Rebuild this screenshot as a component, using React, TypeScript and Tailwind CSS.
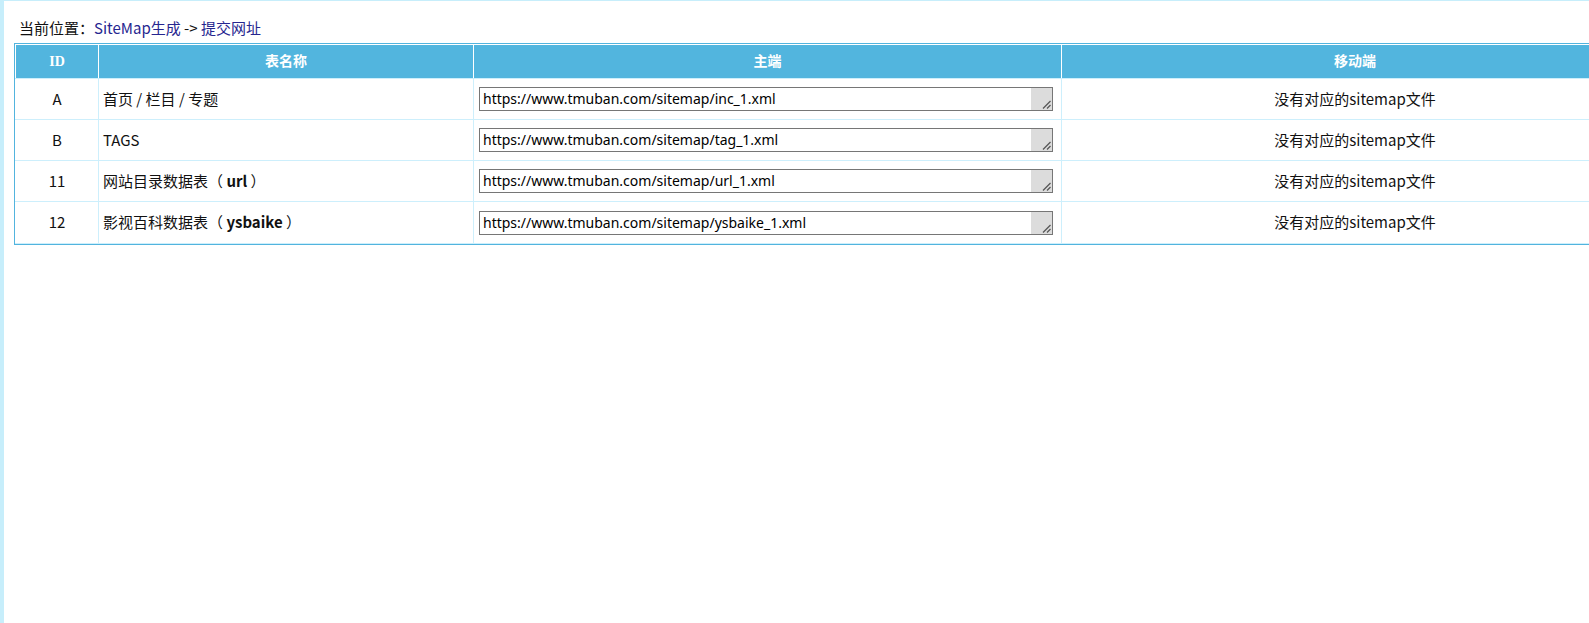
import React from "react";

const rows = [
  { id: "A", name: <>首页 / 栏目 / 专题</>, url: "https://www.tmuban.com/sitemap/inc_1.xml", h: "h-[41px]" },
  { id: "B", name: <>TAGS</>, url: "https://www.tmuban.com/sitemap/tag_1.xml", h: "h-[41px]" },
  { id: "11", name: <>网站目录数据表（ <b>url</b> ）</>, url: "https://www.tmuban.com/sitemap/url_1.xml", h: "h-[41px]" },
  { id: "12", name: <>影视百科数据表（ <b>ysbaike</b> ）</>, url: "https://www.tmuban.com/sitemap/ysbaike_1.xml", h: "h-[43px] border-b" },
];

function UrlBox({ url }: { url: string }) {
  return (
    <div className="flex h-[24px] w-[574px] border border-[#767676] bg-white">
      <div className="flex-1 pl-[3px] text-[14px] leading-[22px] text-black overflow-hidden whitespace-nowrap font-['Noto_Sans',sans-serif]">
        {url}
      </div>
      <div className="relative w-[21px] bg-[#dcdcdc]">
        <svg className="absolute right-[1px] bottom-[1px]" width="10" height="10" viewBox="0 0 10 10">
          <line x1="2" y1="9.5" x2="9.5" y2="2" stroke="#555" strokeWidth="1.3" />
          <line x1="6" y1="9.5" x2="9.5" y2="6" stroke="#555" strokeWidth="1.3" />
        </svg>
      </div>
    </div>
  );
}

const thCls =
  "h-full shrink-0 flex items-center justify-center border-l border-white text-white text-[14px] font-bold font-['Liberation_Serif','Noto_Sans_CJK_SC',serif]";

export default function App() {
  return (
    <div className="w-full h-[623px] overflow-hidden bg-white flex border-t border-[#c7eefb] font-['Noto_Sans_CJK_SC','Noto_Sans',sans-serif] text-[15px] text-[#111]">
      <div className="w-[4px] shrink-0 bg-[#c7eefb]" />
      <div className="flex-1 min-w-0 pl-[10px] overflow-hidden">
        <div className="h-[42px] pt-[17px] pl-[5px] leading-[20px] whitespace-nowrap">
          <span>当前位置：</span>
          <span className="text-[#26268f]">SiteMap生成</span>
          <span> -&gt; </span>
          <span className="text-[#26268f]">提交网址</span>
        </div>
        <div className="w-full overflow-hidden">
          <div className="w-[1635px] border border-[#52b4de]">
            <div className="flex h-[34px] border-t border-white bg-[#52b5de]">
              <div className={`${thCls} w-[83px]`}>ID</div>
              <div className={`${thCls} w-[375px]`}>表名称</div>
              <div className={`${thCls} w-[588px]`}>主端</div>
              <div className={`${thCls} w-[587px]`}>移动端</div>
            </div>
            {rows.map((r) => (
              <div key={r.id} className={`flex border-t border-[#cdeffc] ${r.h}`}>
                <div className="w-[83px] shrink-0 border-l border-white flex items-center justify-center">{r.id}</div>
                <div className="w-[375px] shrink-0 border-l border-[#cdeffc] flex items-center pl-[4px] whitespace-pre">
                  <span>{r.name}</span>
                </div>
                <div className="w-[588px] shrink-0 border-l border-[#cdeffc] flex items-center pl-[5px]">
                  <UrlBox url={r.url} />
                </div>
                <div className="w-[587px] shrink-0 border-l border-[#cdeffc] flex items-center justify-center">没有对应的sitemap文件</div>
              </div>
            ))}
          </div>
        </div>
      </div>
    </div>
  );
}
